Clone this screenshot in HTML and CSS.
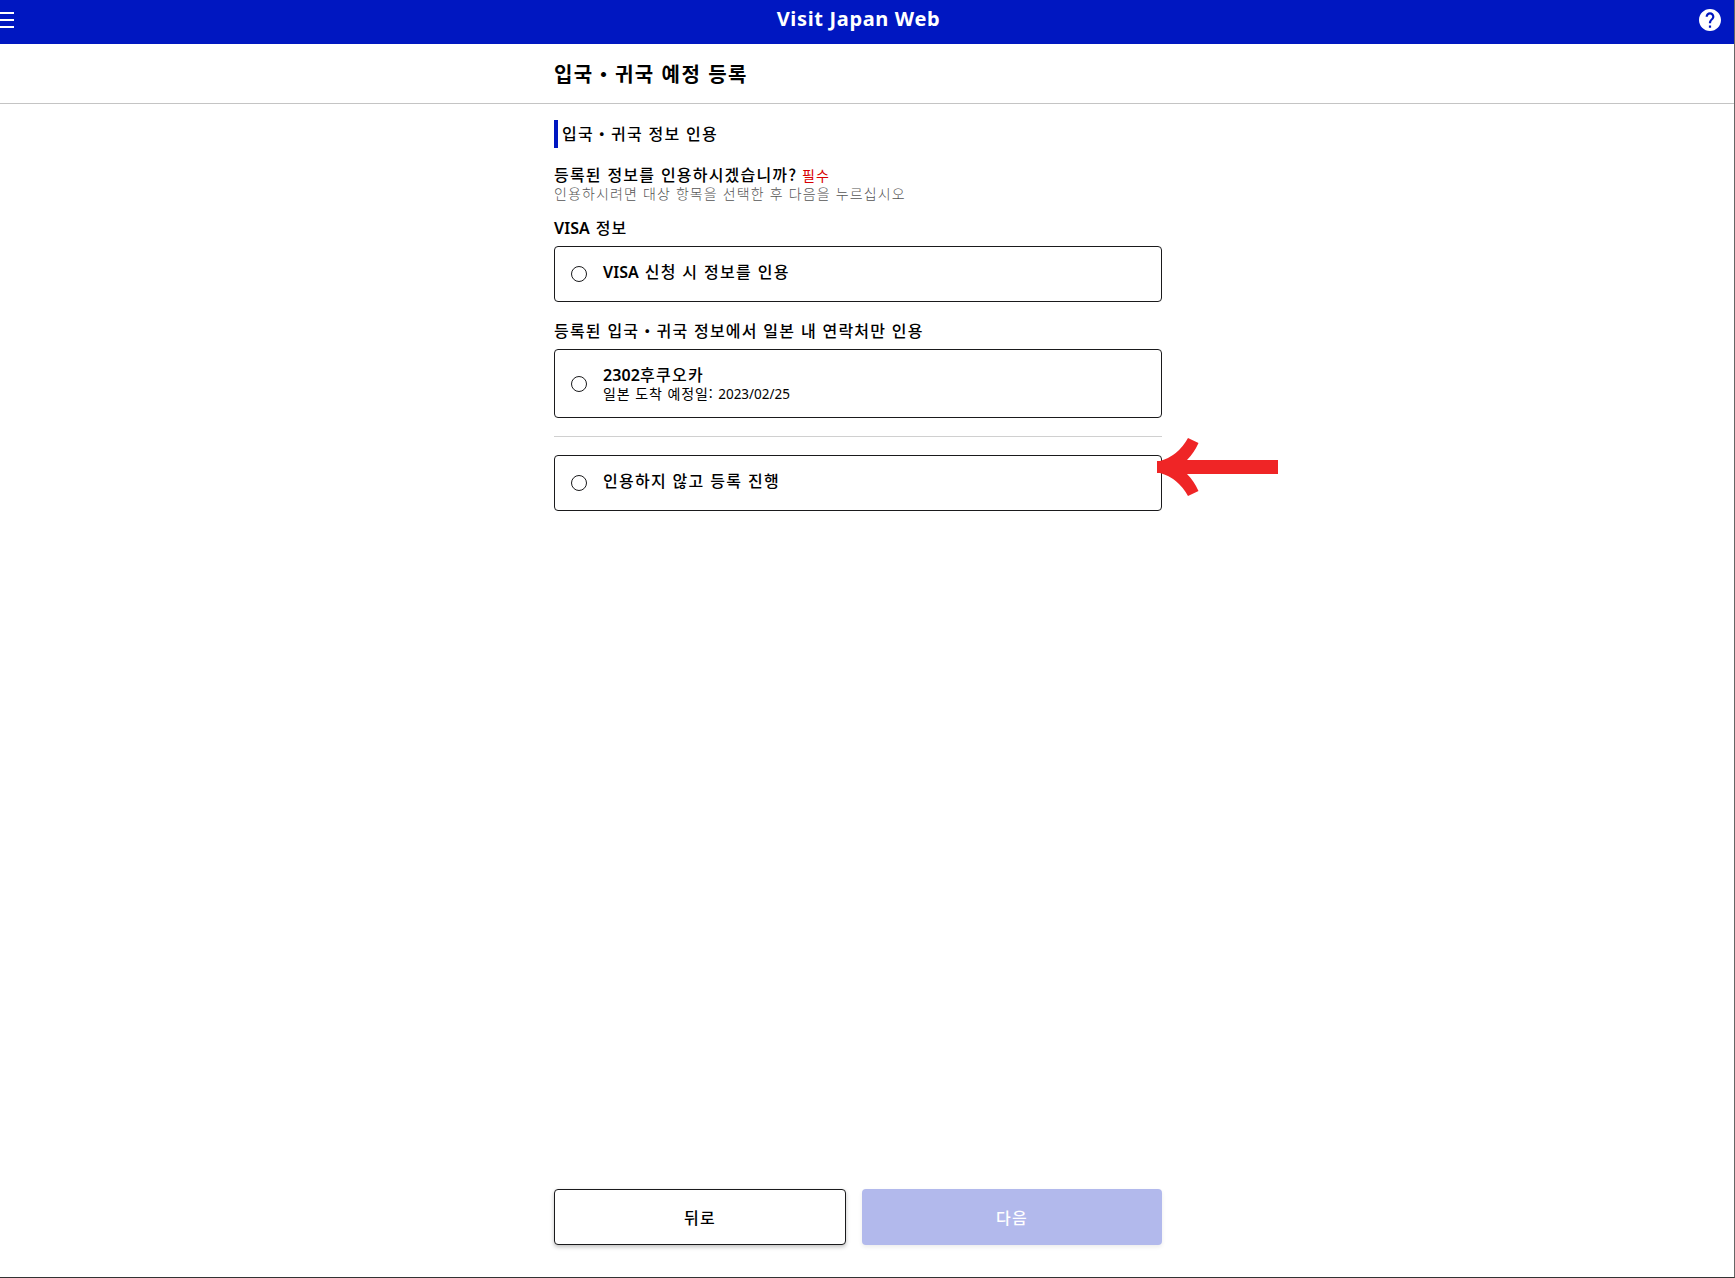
FILE: index.html
```html
<!DOCTYPE html>
<html lang="ko">
<head>
    <meta charset="UTF-8">
    <meta name="viewport" content="width=device-width, initial-scale=1.0">
    <title>Visit Japan Web</title>
    <link rel="stylesheet" href="styles.css">
</head>
<body>
    <header class="header">
        <button class="menu-btn" aria-label="메뉴">
            <svg width="14" height="16" viewBox="0 0 14 16"><path d="M0 0h14v2H0zM0 7h14v2H0zM0 14h14v2H0z" fill="#fff"/></svg>
        </button>
        <div class="logo">Visit Japan Web</div>
        <button class="help-btn" aria-label="도움말">
            <svg width="22" height="22" viewBox="2 2 20 20"><path fill="#fff" d="M12 2C6.48 2 2 6.48 2 12s4.48 10 10 10 10-4.48 10-10S17.52 2 12 2zm1 17h-2v-2h2v2zm2.07-7.75l-.9.92C13.45 12.9 13 13.5 13 15h-2v-.5c0-1.1.45-2.1 1.17-2.83l1.24-1.26c.37-.36.59-.86.59-1.41 0-1.1-.9-2-2-2s-2 .9-2 2H8c0-2.21 1.79-4 4-4s4 1.79 4 4c0 .88-.36 1.68-.93 2.25z"/></svg>
        </button>
    </header>
    <div class="page-title">
        <h1>입국・귀국 예정 등록</h1>
    </div>
    <main class="content">
        <h2 class="section-title">입국・귀국 정보 인용</h2>
        <p class="question">등록된 정보를 인용하시겠습니까? <span class="required">필수</span></p>
        <p class="hint">인용하시려면 대상 항목을 선택한 후 다음을 누르십시오</p>

        <h3 class="group-title"><span class="latin">VISA</span> 정보</h3>
        <label class="card">
            <input type="radio" name="quote">
            <span class="card-text"><span class="latin">VISA</span> 신청 시 정보를 인용</span>
        </label>

        <h3 class="group-title">등록된 입국・귀국 정보에서 일본 내 연락처만 인용</h3>
        <label class="card card-tall">
            <input type="radio" name="quote">
            <span class="card-text"><span class="latin">2302</span>후쿠오카<small>일본 도착 예정일: <span class="date">2023/02/25</span></small></span>
        </label>

        <hr>

        <label class="card">
            <input type="radio" name="quote">
            <span class="card-text">인용하지 않고 등록 진행</span>
            <svg class="arrow" width="121" height="58" viewBox="0 0 121 58"><path fill="#ef2526" d="M0 23H3Q21 18 31 0L41.500 5Q37 15 30 22H121V36H30Q37 43 41.500 53L31 58Q21 40 3 35H0Z"/></svg>
        </label>

        <div class="buttons">
            <button class="btn btn-back">뒤로</button>
            <button class="btn btn-next" disabled>다음</button>
        </div>
    </main>
</body>
</html>
```
FILE: styles.css
```css
* {
    box-sizing: border-box;
}
body {
    margin: 0;
    height: 100vh;
    display: flex;
    flex-direction: column;
    font-family: "Noto Sans CJK KR", sans-serif;
    font-size: 16px;
    color: #000;
    background-color: #fff;
    border-right: 1px solid #666;
    border-bottom: 1px solid #333;
    overflow: hidden;
}
h1, h2, h3, p {
    margin: 0;
}
button {
    font-family: inherit;
    cursor: pointer;
}
.header {
    height: 44px;
    flex: none;
    display: grid;
    grid-template-columns: 60px 1fr 78px;
    background-color: #0017c1;
    color: #fff;
}
.menu-btn,
.help-btn {
    display: flex;
    border: none;
    background: none;
}
.menu-btn {
    padding: 12px 0 0;
}
.help-btn {
    justify-content: flex-end;
    padding: 9px 13px 0 0;
}
.logo {
    padding-left: 1px;
    font-family: "Noto Sans", sans-serif;
    font-size: 20px;
    font-weight: 700;
    line-height: 38px;
    letter-spacing: 0.65px;
    text-align: center;
}
.page-title {
    height: 60px;
    flex: none;
    padding-right: 18px;
    border-bottom: 1px solid #c4c4c4;
}
.page-title h1 {
    width: 608px;
    margin: 0 auto;
    font-size: 20px;
    font-weight: 700;
    line-height: 59px;
    letter-spacing: 1.4px;
}
.content {
    flex: 1;
    width: 608px;
    margin-left: 554px;
    padding: 16px 0 32px;
    display: flex;
    flex-direction: column;
}
.section-title {
    height: 28px;
    padding-left: 4px;
    border-left: 4px solid #0017c1;
    font-size: 16px;
    font-weight: 500;
    line-height: 26px;
    letter-spacing: 1.2px;
}
.question {
    margin-top: 16px;
    font-weight: 500;
    line-height: 20px;
    letter-spacing: 1.2px;
}
.required {
    margin-left: -1px;
    font-size: 14px;
    font-weight: 400;
    color: #d80000;
}
.hint {
    margin-bottom: 3px;
    font-size: 14px;
    font-weight: 300;
    line-height: 17px;
    letter-spacing: 1.1px;
    color: #555;
}
.group-title {
    margin-top: 12px;
    height: 29px;
    font-size: 16px;
    font-weight: 500;
    line-height: 20px;
    letter-spacing: 1.2px;
}
.card + .group-title {
    margin-top: 18px;
}
.latin {
    font-family: "Noto Sans", sans-serif;
    font-weight: 600;
    letter-spacing: 0.1px;
}
.card {
    position: relative;
    height: 56px;
    display: flex;
    align-items: center;
    padding: 0 16px;
    border: 1px solid #1a1a1c;
    border-radius: 4px;
    cursor: pointer;
}
.card-tall {
    height: 69px;
}
.card input {
    appearance: none;
    width: 16px;
    height: 16px;
    margin: 0 16px 0 0;
    border: 1px solid #1a1a1c;
    border-radius: 50%;
}
.card-text {
    padding-bottom: 6px;
    font-weight: 500;
    line-height: 20px;
    letter-spacing: 1.25px;
}
.card-tall .card-text {
    padding-bottom: 1px;
}
.card small {
    display: block;
    font-size: 14px;
    font-weight: 400;
    line-height: 17px;
    letter-spacing: 0.85px;
}
.date {
    font-family: "Noto Sans", sans-serif;
    font-size: 13.5px;
    letter-spacing: 0;
}
hr {
    width: 100%;
    margin: 18px 0;
    border: none;
    border-top: 1px solid #d0d0d0;
}
.arrow {
    position: absolute;
    left: 602px;
    top: -18px;
}
.buttons {
    margin-top: auto;
    display: grid;
    grid-template-columns: 292px 300px;
    gap: 16px;
}
.btn {
    height: 56px;
    padding: 0;
    border-radius: 4px;
    font-size: 16px;
    font-weight: 500;
    letter-spacing: 1.2px;
}
.btn-back {
    border: 1px solid #1a1a1c;
    background-color: #fff;
    color: #000;
    box-shadow: 0 2px 4px rgba(0, 0, 0, 0.25);
}
.btn-next {
    border: none;
    background-color: #b2b9ec;
    color: #fff;
    box-shadow: 0 2px 4px rgba(0, 0, 0, 0.08);
}
```
